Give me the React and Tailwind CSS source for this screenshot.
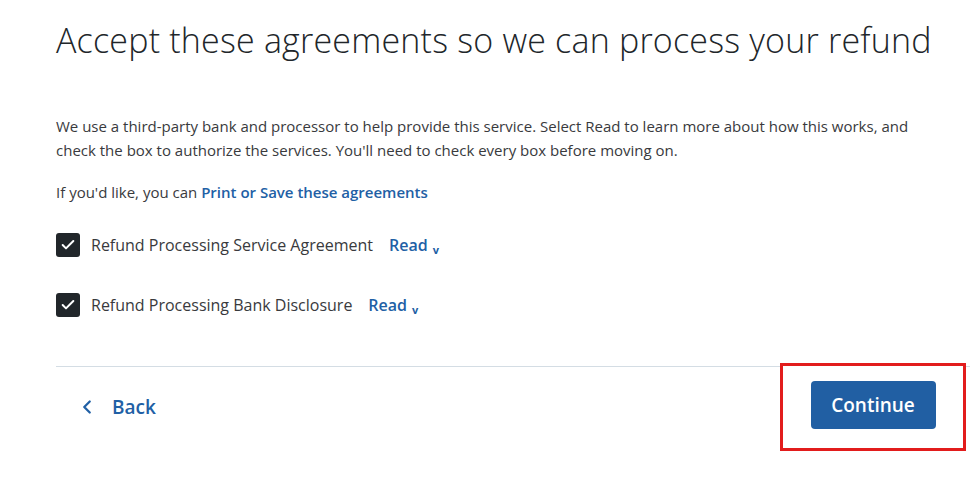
import { Check, ChevronLeft } from 'lucide-react';

const agreements = [
  { id: 1, label: 'Refund Processing Service Agreement' },
  { id: 2, label: 'Refund Processing Bank Disclosure' },
];

const App = () => {
  return (
    <div className="w-[978px] h-[496px] bg-white overflow-hidden font-['Open_Sans',sans-serif] text-[#393a3d]">
      <div className="pl-[56px] pr-[8px]">
        <h1 className="pt-[17px] text-[34px] leading-[46px] font-light text-[#21262a] whitespace-nowrap tracking-[0.2px]">
          Accept these agreements so we can process your refund
        </h1>

        <p className="mt-[51px] text-[15px] leading-[24px] pr-[40px]">
          We use a third-party bank and processor to help provide this service. Select Read to learn more about how this works,
          and check the box to authorize the services. You'll need to check every box before moving on.
        </p>

        <p className="mt-[18px] text-[15px] leading-[24px]">
          If you'd like, you can <a href="#" className="font-semibold text-[#2160a5]">Print or Save these agreements</a>
        </p>

        <div className="mt-[29px] flex flex-col gap-[36px]">
          {agreements.map((a) => (
            <div key={a.id} className="flex items-center h-[24px]">
              <span className="w-[24px] h-[24px] rounded-[3px] bg-[#21262a] flex items-center justify-center">
                <Check size={16} strokeWidth={3} className="text-white" />
              </span>
              <span className="ml-[11px] text-[16px]">{a.label}</span>
              <a href="#" className="ml-[16px] font-semibold text-[16px] text-[#2160a5] flex items-center">
                Read
                <span className="ml-[5px] mt-[8px] text-[11px] leading-none font-bold">v</span>
              </a>
            </div>
          ))}
        </div>

        <div className="relative mt-[49px]">
          <div className="h-px bg-[#d4dde4] w-[914px]" />
          <div className="flex items-center justify-between h-[80px]">
            <button className="ml-[20px] flex items-center gap-[14px] text-[#2160a5] text-[19px] font-semibold">
              <ChevronLeft size={22} strokeWidth={2.5} />
              Back
            </button>
          </div>
          <div className="absolute left-[724px] top-[-3px] w-[186px] h-[88px] border-[3px] border-[#e21c1c] bg-white flex items-center justify-center">
            <button className="mb-[4px] w-[125px] h-[48px] rounded-[4px] bg-[#215fa3] text-white text-[19px] font-semibold">
              Continue
            </button>
          </div>
        </div>
      </div>
    </div>
  );
};

export default App;
